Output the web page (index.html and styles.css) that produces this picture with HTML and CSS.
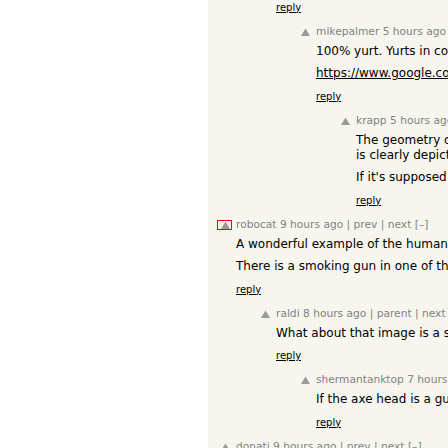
FILE: index.html
```html
<!DOCTYPE html>
<html lang="en">
<head>
<meta charset="utf-8">
<title>Comments</title>
<link rel="stylesheet" href="styles.css">
</head>
<body>
<div class="panel">
  <div class="comment">
    <div class="ind lvl1"></div>
    <div class="votelinks"></div>
    <div class="default">
      <div class="reply first"><a href="#">reply</a></div>
    </div>
  </div>

  <div class="comment">
    <div class="ind lvl2"></div>
    <div class="votelinks"><a class="vote" href="#"><svg width="15" height="10" viewBox="0 0 15 10"><polygon points="8.5,1.5 4,9 13,9" fill="#9a9a9a"/></svg></a></div>
    <div class="default">
      <div class="comhead">mikepalmer 5 hours ago | parent | next [–]</div>
      <div class="commtext">
        <p>100% yurt. Yurts in colder climates are built exactly like that.</p>
        <p><a class="ulink" href="#">https://www.google.com/search?q=yurt+interior&amp;tbm=isch</a></p>
      </div>
      <div class="reply"><a href="#">reply</a></div>
    </div>
  </div>

  <div class="comment">
    <div class="ind lvl3"></div>
    <div class="votelinks"><a class="vote" href="#"><svg width="15" height="10" viewBox="0 0 15 10"><polygon points="8.5,1.5 4,9 13,9" fill="#9a9a9a"/></svg></a></div>
    <div class="default">
      <div class="comhead">krapp 5 hours ago | parent | next [–]</div>
      <div class="commtext">
        <p>The geometry of the lattice walls and the roof ring<br>is clearly depicted in the second photo.</p>
        <p>If it's supposed to be a tent, it's a very odd one.</p>
      </div>
      <div class="reply"><a href="#">reply</a></div>
    </div>
  </div>

  <div class="comment">
    <div class="ind lvl0"></div>
    <div class="votelinks"><a class="vote focused" href="#"><svg width="15" height="10" viewBox="0 0 15 10"><polygon points="8.5,1.5 4,9 13,9" fill="#9a9a9a"/></svg></a></div>
    <div class="default">
      <div class="comhead">robocat 9 hours ago | prev | next [–]</div>
      <div class="commtext">
        <p>A wonderful example of the human mind's ability to find patterns.</p>
        <p>There is a smoking gun in one of the photos, if you look closely.</p>
      </div>
      <div class="reply"><a href="#">reply</a></div>
    </div>
  </div>

  <div class="comment">
    <div class="ind lvl1"></div>
    <div class="votelinks"><a class="vote" href="#"><svg width="15" height="10" viewBox="0 0 15 10"><polygon points="8.5,1.5 4,9 13,9" fill="#9a9a9a"/></svg></a></div>
    <div class="default">
      <div class="comhead">raldi 8 hours ago | parent | next [–]</div>
      <div class="commtext">
        <p>What about that image is a smoking gun?</p>
      </div>
      <div class="reply"><a href="#">reply</a></div>
    </div>
  </div>

  <div class="comment">
    <div class="ind lvl2"></div>
    <div class="votelinks"><a class="vote" href="#"><svg width="15" height="10" viewBox="0 0 15 10"><polygon points="8.5,1.5 4,9 13,9" fill="#9a9a9a"/></svg></a></div>
    <div class="default">
      <div class="comhead">shermantanktop 7 hours ago | parent | next [–]</div>
      <div class="commtext">
        <p>If the axe head is a gun, then what is the handle?</p>
      </div>
      <div class="reply"><a href="#">reply</a></div>
    </div>
  </div>

  <div class="comment">
    <div class="ind lvl0"></div>
    <div class="votelinks"><a class="vote" href="#"><svg width="15" height="10" viewBox="0 0 15 10"><polygon points="8.5,1.5 4,9 13,9" fill="#9a9a9a"/></svg></a></div>
    <div class="default">
      <div class="comhead">donati 9 hours ago | prev | next [–]</div>
      <div class="commtext">
        <p>Looks like a yurt to me.</p>
      </div>
      <div class="reply"><a href="#">reply</a></div>
    </div>
  </div>
</div>
</body>
</html>
```

FILE: styles.css
```css
html, body {
  margin: 0;
  padding: 0;
  overflow: hidden;
  background: #ffffff;
}

body {
  font-family: "DejaVu Sans", Verdana, sans-serif;
  color: #000000;
}

.panel {
  margin-left: 208px;
  min-height: 100vh;
  background: #f6f6ef;
  padding: 0.5px 0 0 9px;
  overflow: hidden;
}

.comment {
  display: flex;
  align-items: flex-start;
}

.comment + .comment {
  margin-top: 11px;
}

.ind { flex: none; }
.lvl0 { width: 0; }
.lvl1 { width: 40px; }
.lvl2 { width: 80px; }
.lvl3 { width: 120px; }

.votelinks {
  flex: none;
  width: 15px;
  margin-right: 4px;
}

.vote {
  display: block;
  width: 15px;
  height: 10px;
  margin-top: 2px;
}

.vote svg {
  display: block;
}

.vote.focused {
  outline: 1px solid #e8000b;
  outline-offset: -1px;
}

.default {
  flex: none;
  white-space: nowrap;
}

.comhead {
  font-size: 10.67px;
  line-height: 14px;
  color: #828282;
}

.commtext {
  margin-top: 5px;
  font-size: 12px;
  line-height: 15px;
}

.commtext p {
  margin: 0;
}

.commtext p + p {
  margin-top: 7.5px;
}

.ulink {
  color: #000000;
  text-decoration: underline;
}

.reply {
  margin-top: 8.5px;
  font-size: 10px;
  line-height: 13px;
}

.reply.first {
  margin-top: 0;
}

.reply a {
  color: #000000;
  text-decoration: underline;
}
```
